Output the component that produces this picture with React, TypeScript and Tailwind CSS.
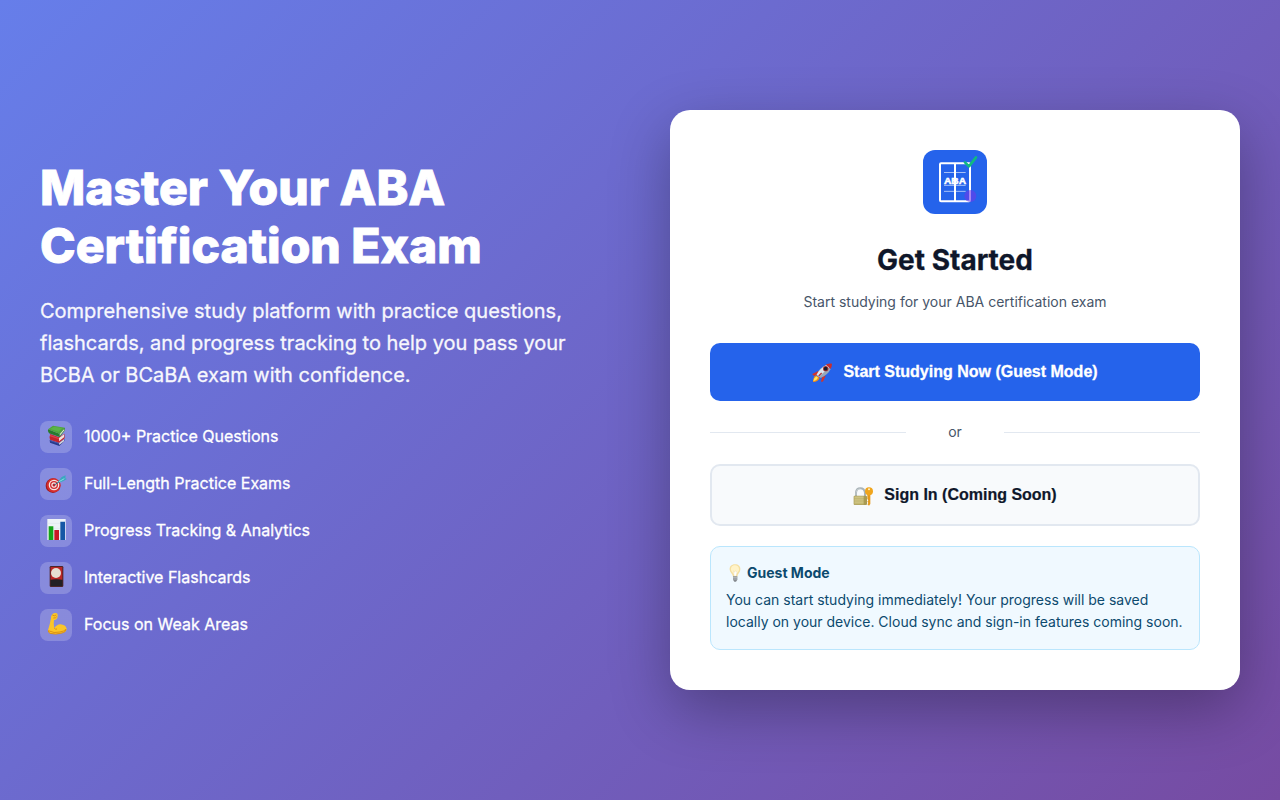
import type { ReactNode } from "react";

function Logo() {
  return (
    <svg className="block size-16" viewBox="0 0 192 192">
      <rect width="192" height="192" rx="36" fill="#2563eb" />
      <path d="M63 67.500h65M63 106h65M63 124h65" stroke="#fff" strokeWidth="3" opacity=".6" />
      <rect x="51" y="39.500" width="90" height="114" rx="3" fill="none" stroke="#fff" strokeWidth="6" />
      <circle cx="142" cy="138" r="18" fill="#6d3bea" opacity=".6" />
      <path d="M96 39v115" stroke="#fff" strokeWidth="6" />
      <text x="96" y="101" textAnchor="middle" fontSize="29" fontWeight="700" fontFamily="Liberation Sans, sans-serif" fill="#fff" stroke="#fff" strokeWidth="1.500" textLength="66" lengthAdjust="spacingAndGlyphs">ABA</text>
      <path d="M126 37l12 12 21-27" fill="none" stroke="#10b981" strokeWidth="8" strokeLinecap="round" strokeLinejoin="round" />
    </svg>
  );
}

function Books() {
  return (
    <svg className="size-8" viewBox="0 0 96 96">
      <path d="M29 57l28 9 16-12v6L58 75 30 65z" fill="#27398a" />
      <path d="M57 66l15-11v6L58 72z" fill="#d3d4dc" />
      <path d="M30 57l27 9v3l-27-9z" fill="#4058ae" />
      <path d="M31 39l26 10 16-11 1 14-17 13-27-9q-3-9 1-17z" fill="#c4242d" />
      <path d="M57 51l15-11v9L57 61z" fill="#eee4df" />
      <path d="M30 41l27 10v4l-27-9z" fill="#df4147" />
      <path d="M24 25l34 13 17-18v8L59 48 27 37q-5-5-3-12z" fill="#287b2d" />
      <path d="M59 39l14-16v5L59 45z" fill="#dce7cd" />
      <path d="M24 25l15-11 36 6-17 18z" fill="#4fa53b" />
      <path d="M31 24l11-7 25 4-11 11z" fill="#5bb346" />
    </svg>
  );
}

function Target() {
  return (
    <svg className="size-8" viewBox="0 0 96 96">
      <circle cx="39" cy="53" r="22" fill="#9f1b20" />
      <circle cx="41" cy="52" r="21" fill="#d52e2e" />
      <circle cx="42" cy="51" r="16" fill="#f7e7e2" />
      <circle cx="42" cy="51" r="12" fill="#d12b2e" />
      <circle cx="42" cy="51" r="8" fill="#f8e9e5" />
      <circle cx="42" cy="51" r="4.500" fill="#bd2028" />
      <path d="M43 51l25-17" stroke="#276d84" strokeWidth="3" />
      <path d="M54 41l11-14 12-5-1 9 5 2-12 7-14 4z" fill="#3aa9be" />
      <path d="M57 41l16-9" stroke="#88dce2" strokeWidth="3" />
    </svg>
  );
}

function BarChart() {
  return (
    <svg className="size-8" viewBox="0 0 96 96">
      <path d="M22 12h55v63H22z" fill="#eef3f8" />
      <path d="M22 25h55M22 40h55M22 57h55" stroke="#d7e1eb" strokeWidth="1.500" />
      <path d="M26 34h14v41H26z" fill="#16a51b" />
      <path d="M43 45h14v30H43z" fill="#c91825" />
      <path d="M61 20h14v55H61z" fill="#1557a5" />
    </svg>
  );
}

function PlayingCard() {
  return (
    <svg className="size-8" viewBox="0 0 96 96">
      <rect x="29" y="12" width="41" height="63" rx="4" fill="#4b2529" />
      <path d="M32 15h35v38H32z" fill="#b92625" />
      <circle cx="48" cy="33" r="15" fill="#e6ded1" />
      <path d="M32 54q16-4 35 0v18H32z" fill="#222024" />
    </svg>
  );
}

function Bicep() {
  return (
    <svg className="size-8" viewBox="0 0 96 96">
      <path d="M37 16q5-6 14-3 5 5 1 14-3 7-10 6-2 11 1 25 6-11 18-12 16 1 19 13 0 10-14 12-20 7-36 1-6-2-6-8 6-19 9-36-1-8 4-12z" fill="#fbc529" />
      <path d="M25 65q17 9 35 4 12-2 18-8 0 8-12 11-20 6-36 1-6-3-5-8M43 58q4 4 8 2M40 27q7 1 10-4M37 18q5 5 12 0" fill="none" stroke="#dc9214" strokeWidth="3" />
    </svg>
  );
}

function Rocket() {
  return (
    <svg className="h-5 w-[21px]" viewBox="0 0 63 60">
      <path d="M20 23L1 33q0 5 7 5l12-6zM30 42l-3 14q6 2 8-4l6-14z" fill="#d2352b" />
      <path d="M12 37Q3 42 3 57q15 0 20-13z" fill="#f58b16" />
      <path d="M13 40q-8 4-9 15 10-2 14-11z" fill="#ffe65b" />
      <path d="M14 35Q23 13 43 5l13 13Q48 35 26 45z" fill="#98a9b9" />
      <path d="M14 35Q25 15 44 6l7 7Q38 26 21 41z" fill="#dce7f0" />
      <path d="M41 5q10-4 19-3 0 9-5 16-4-8-14-13z" fill="#c92d2d" />
      <circle cx="41" cy="17" r="8" fill="#b33533" />
      <circle cx="41" cy="17" r="5.500" fill="#171d29" />
      <path d="M20 39l9-9" stroke="#b93434" strokeWidth="4" />
    </svg>
  );
}

function LockKey() {
  return (
    <svg className="h-5 w-[21px]" viewBox="0 0 63 60">
      <path d="M9 28V17Q10 4 22 4t14 13v11" fill="none" stroke="#a9b3b8" strokeWidth="6" />
      <path d="M9 25V17Q10 5 22 5" fill="none" stroke="#d2d9dc" strokeWidth="2" />
      <rect x="2" y="26" width="40" height="28" rx="3" fill="#a99b55" />
      <path d="M4 28h28v24H4z" fill="#cec383" />
      <path d="M4 35h36M4 42h36M4 49h36" stroke="#a99a4b" strokeWidth="1.500" opacity=".6" />
      <path d="M43 20h9v31l-4 5-5-4 3-4-3-4 3-4-3-4z" fill="#e59a1c" />
      <circle cx="48" cy="13" r="12" fill="#f0a51d" />
      <circle cx="48" cy="7" r="3" fill="#fff4cc" />
    </svg>
  );
}

function Bulb() {
  return (
    <svg className="h-[18px] w-3 shrink-0" viewBox="0 0 36 54">
      <path d="M18 1C7 1 1 8 2 17c1 9 9 12 10 21h13c1-9 8-12 9-21C35 7 28 1 18 1z" fill="#f5dfa0" />
      <path d="M18 4C10 4 5 10 6 18c2 7 9 10 10 18h5c1-9 9-12 9-20 0-8-6-12-12-12z" fill="#fff3c8" />
      <path d="M13 20l4 5 3-5 4 4-3 13h-5z" fill="#fff" stroke="#ead597" />
      <path d="M12 37h13v10l-4 6h-5l-4-6z" fill="#85898e" />
      <path d="M12 40h13M12 45h12" stroke="#d0d4d8" strokeWidth="2" />
    </svg>
  );
}

const features: { icon: ReactNode; label: string }[] = [
  { icon: <Books />, label: "1000+ Practice Questions" },
  { icon: <Target />, label: "Full-Length Practice Exams" },
  { icon: <BarChart />, label: "Progress Tracking & Analytics" },
  { icon: <PlayingCard />, label: "Interactive Flashcards" },
  { icon: <Bicep />, label: "Focus on Weak Areas" },
];

export default function App() {
  return (
    <div className="flex min-h-screen items-center justify-center bg-[linear-gradient(135deg,#667eea_0%,#764ba2_100%)] font-['Inter',sans-serif]">
      <main className="grid w-full max-w-[1280px] grid-cols-2 items-center gap-[60px] px-10">
        <section className="text-white">
          <h1 className="mb-5 text-[48px] leading-[1.2] font-extrabold [-webkit-text-stroke:0.9px_white]">
            Master Your ABA
            <br />
            Certification Exam
          </h1>
          <p className="mb-[30px] text-xl leading-[1.6] opacity-95 [-webkit-text-stroke:0.3px_white]">
            Comprehensive study platform with practice questions, flashcards, and progress tracking to help you pass your BCBA or BCaBA exam with confidence.
          </p>
          <ul className="flex flex-col gap-[15px]">
            {features.map(({ icon, label }) => (
              <li key={label} className="flex items-center gap-3 text-base [-webkit-text-stroke:0.3px_white]">
                <span className="size-8 overflow-hidden rounded-lg bg-white/20" aria-hidden="true">{icon}</span>
                <span className="pb-0.5 leading-6">{label}</span>
              </li>
            ))}
          </ul>
        </section>

        <section className="flex h-[580px] flex-col rounded-[20px] bg-white p-10 shadow-[0_20px_60px_rgba(0,0,0,0.3)]">
          <div className="mb-[29px] flex justify-center"><Logo /></div>
          <h2 className="mb-[14px] text-center text-[28px] leading-[34px] font-bold text-[#0f172a] [-webkit-text-stroke:0.3px_#0f172a]">Get Started</h2>
          <p className="mb-[30px] text-center text-sm leading-[22px] text-[#475569]">Start studying for your ABA certification exam</p>
          <button className="flex h-[58px] shrink-0 items-center justify-center gap-[10px] rounded-[10px] bg-[#2563eb] font-['Liberation_Sans',sans-serif] text-base font-bold text-white [-webkit-text-stroke:0.3px_white]">
            <span className="pt-px"><Rocket /></span>
            Start Studying Now (Guest Mode)
          </button>
          <div className="my-5 flex h-[23px] shrink-0 items-center text-sm text-[#475569]">
            <span className="h-px flex-1 bg-[#e2e8f0]" />
            <span className="w-[98px] pb-0.5 text-center">or</span>
            <span className="h-px flex-1 bg-[#e2e8f0]" />
          </div>
          <button className="flex h-[62px] shrink-0 items-center justify-center gap-[10px] rounded-[10px] border-2 border-[#e2e8f0] bg-[#f8fafc] font-['Liberation_Sans',sans-serif] text-base font-bold text-[#0f172a] [-webkit-text-stroke:0.2px_#0f172a]">
            <span className="pt-[3px]"><LockKey /></span>
            Sign In (Coming Soon)
          </button>
          <div className="mt-5 h-[104px] shrink-0 rounded-[10px] border border-[#bae6fd] bg-[#f0f9ff] p-[15px] text-sm text-[#0c4a6e]">
            <div className="mb-[5px] flex h-[22px] items-center gap-[6px] pl-[3px] leading-[22px] font-bold">
              <Bulb />
              Guest Mode
            </div>
            <p className="leading-[22.4px]">You can start studying immediately! Your progress will be saved locally on your device. Cloud sync and sign-in features coming soon.</p>
          </div>
        </section>
      </main>
    </div>
  );
}
